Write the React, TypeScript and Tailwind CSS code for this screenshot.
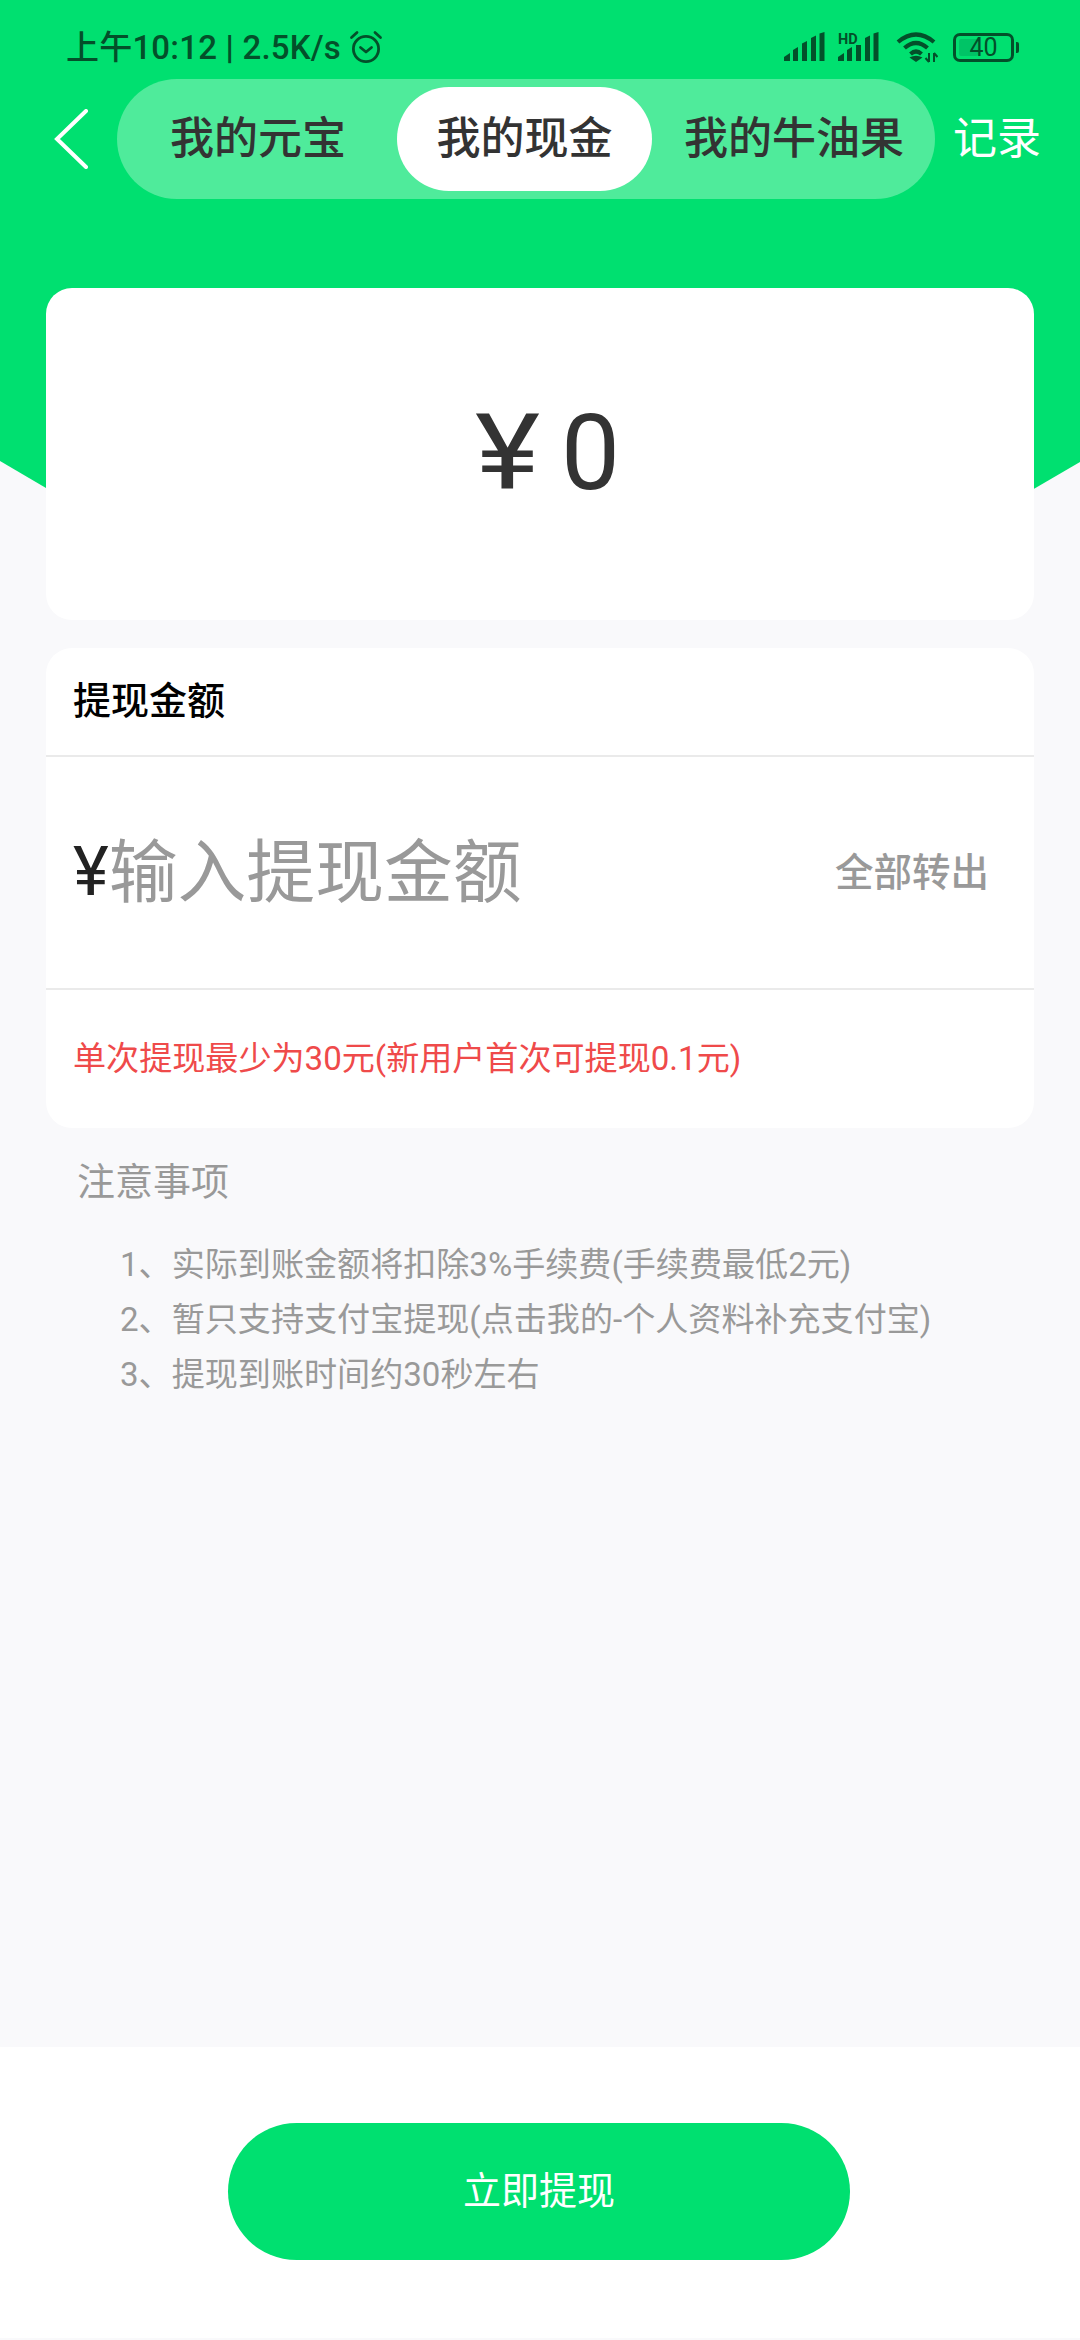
import React from 'react';

function AlarmIcon() {
  return (
    <svg width="34" height="34" viewBox="0 0 34 34" fill="none" stroke="#03502a" strokeWidth="2.8" strokeLinecap="round" strokeLinejoin="round">
      <circle cx="17" cy="19" r="12.6" />
      <path d="M11.5 17.5 17 22l5.5-4.5" />
      <path d="M2.5 7.5 8 2.5" />
      <path d="M31.5 7.5 26 2.5" />
    </svg>
  );
}

function SignalIcon({ hd }: { hd?: boolean }) {
  return (
    <svg width="41" height="30" viewBox="0 0 41 30" fill="#03502a">
      <path d="M0 29V25L6 21V29Z" />
      <path d="M9 29V18L14 15V29Z" />
      <path d="M18 29V11.500L23 9V29Z" />
      <path d="M27 29V6L32 3.500V29Z" />
      <path d="M35.500 29V1.500L40.500 0V29Z" />
      {hd && (
        <>
          <rect x="0" y="0" width="25" height="13" fill="#00e070" />
          <text x="0" y="11.500" fontSize="14.500" fontWeight="700" fontFamily="Roboto, sans-serif" fill="#03502a">HD</text>
        </>
      )}
    </svg>
  );
}

function WifiIcon() {
  return (
    <svg width="42" height="32" viewBox="0 0 42 32" fill="none" stroke="#03502a" strokeWidth="4.2">
      <path d="M2 11Q20 -4 38 11" />
      <path d="M8.500 17Q20 7 31.500 17" />
      <path d="M14.500 23Q20 18 25.500 23" />
      <path d="M20 31 13.500 26.500Q20 23 26.500 26.500Z" fill="#03502a" stroke="none" />
      <path d="M33 22V31M33 31l-3.500-4M38 31V22M38 22l3.500 4" strokeWidth="2" />
    </svg>
  );
}

function Battery() {
  return (
    <div className="flex items-center gap-[2px]">
      <div className="relative flex h-[29px] w-[61px] items-center justify-center rounded-[7px] border-[3px] border-[#03502a]">
        <div className="absolute top-[3px] bottom-[3px] left-[3px] w-[19px] rounded-[2px] bg-[#00c466]" />
        <span className="relative text-[25px] leading-none text-[#03502a]">40</span>
      </div>
      <div className="h-[11px] w-[3px] rounded-r-[2px] bg-[#03502a]" />
    </div>
  );
}

export default function App() {
  return (
    <main className="flex h-[2340px] w-full flex-col bg-[#f9f9fb] font-['Roboto','Noto_Sans_CJK_SC',sans-serif]">
      {/* green header */}
      <section className="h-[490px] shrink-0 bg-[#00e070] [clip-path:polygon(0_0,100%_0,100%_462px,1032px_490px,46px_488px,0_461px)]">
        {/* status bar */}
        <div className="flex h-[79px] items-start justify-between pt-[30px] pr-[61px] pl-[66px]">
          <div className="flex h-[34px] items-center gap-[8px] text-[33px] font-medium tracking-[0.2px] text-[#03502a]">
            <span className="pt-[2px]">
              上午10:12 <b className="font-bold">|</b> 2.5K/s
            </span>
            <AlarmIcon />
          </div>
          <div className="flex h-[34px] items-center">
            <SignalIcon />
            <div className="ml-[13px]">
              <SignalIcon hd />
            </div>
            <div className="ml-[17px]">
              <WifiIcon />
            </div>
            <div className="ml-[15px]">
              <Battery />
            </div>
          </div>
        </div>

        {/* tabs */}
        <div className="flex h-[120px] items-center">
          <svg className="ml-[54px] shrink-0" width="34" height="60" viewBox="0 0 34 60" fill="none" stroke="#fff" strokeWidth="4" strokeLinecap="round" strokeLinejoin="miter">
            <path d="M32 2 3 30l29 28" />
          </svg>
          <div className="ml-[29px] flex h-[120px] w-[818px] shrink-0 items-center rounded-full bg-[#4feb9b] text-[44px] leading-none font-medium text-[#333]">
            <span className="ml-[53px] w-[176px]">我的元宝</span>
            <span className="ml-[51px] flex h-[104px] w-[255px] items-center justify-center rounded-full bg-white">我的现金</span>
            <span className="ml-[32px]">我的牛油果</span>
          </div>
          <span className="ml-[18px] text-[44px] leading-none text-white">记录</span>
        </div>
      </section>

      {/* balance */}
      <section className="relative mx-[46px] -mt-[202px] flex h-[332px] shrink-0 items-center justify-center rounded-[26px] bg-white pb-[2px] pl-[20px]">
        <span className="text-[105px] leading-none text-[#333]">
          <span className="inline-block scale-x-[1.18]">¥</span> 0
        </span>
      </section>

      {/* withdraw form */}
      <section className="mx-[46px] mt-[28px] flex h-[480px] shrink-0 flex-col rounded-[26px] bg-white">
        <div className="flex h-[109px] items-center border-b-2 border-[#eaeaea] pl-[27px] text-[38px] font-medium text-black">提现金额</div>
        <div className="flex h-[233px] items-center justify-between border-b-2 border-[#eaeaea] pr-[45px] pl-[27px]">
          <div className="flex items-center text-[68.800px] leading-none text-[#999]">
            <span className="text-[68px] text-[#222]">¥</span>
            <span className="pt-[4px]">输入提现金额</span>
          </div>
          <span className="text-[38.500px] font-medium text-[#999]">全部转出</span>
        </div>
        <div className="flex flex-1 items-center pl-[27px] text-[33.100px] text-[#ef4a4a]">单次提现最少为30元(新用户首次可提现0.1元)</div>
      </section>

      {/* notes */}
      <section className="pt-[30px] pl-[77px] text-[#999]">
        <h2 className="text-[38px] leading-[48px]">注意事项</h2>
        <ul className="mt-[31px] pl-[43px] text-[33.100px] leading-[55px]">
          <li>1、实际到账金额将扣除3%手续费(手续费最低2元)</li>
          <li>2、暂只支持支付宝提现(点击我的-个人资料补充支付宝)</li>
          <li>3、提现到账时间约30秒左右</li>
        </ul>
      </section>

      {/* bottom button */}
      <footer className="mt-auto mb-[2px] flex h-[291px] shrink-0 items-start justify-center bg-white pt-[76px] pr-[2px]">
        <button className="h-[137px] w-[622px] rounded-full bg-[#00e070] text-[38px] text-white">立即提现</button>
      </footer>
    </main>
  );
}
